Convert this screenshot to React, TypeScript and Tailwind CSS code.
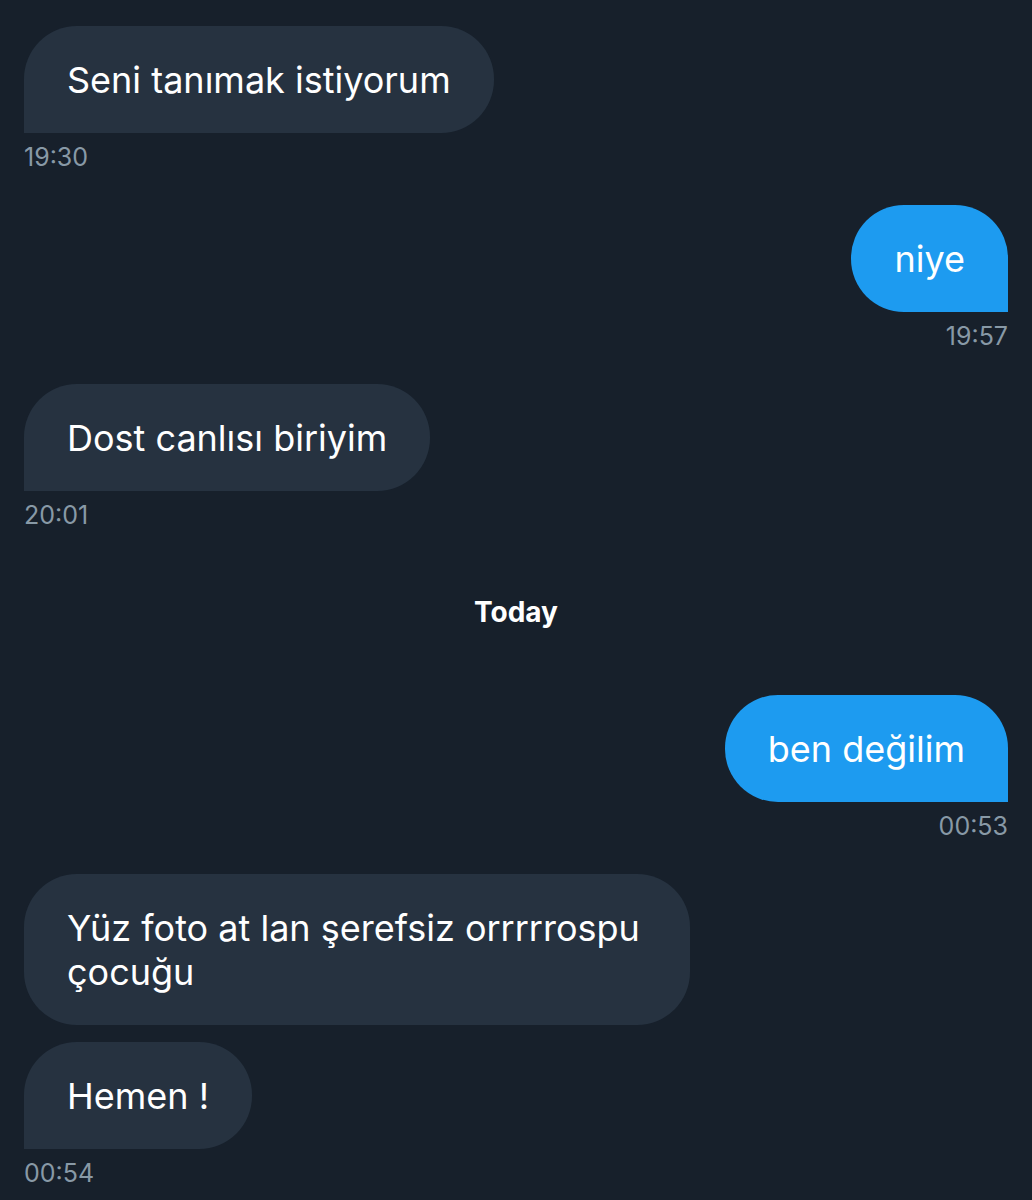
import React from "react";

type Msg = {
  text: string;
  mine?: boolean;
  time?: string;
  tail?: boolean;
};

const Bubble: React.FC<Msg> = ({ text, mine, tail = true }) => {
  const side = mine
    ? "bg-[#1d9bf0] self-end " + (tail ? "rounded-br-none" : "")
    : "bg-[#263240] self-start " + (tail ? "rounded-bl-none" : "");
  return (
    <div
      className={`max-w-[666px] rounded-[53px] px-[43px] py-[31.5px] text-[36px] leading-[44px] text-white ${side}`}
    >
      {text}
    </div>
  );
};

const Time: React.FC<{ value: string; mine?: boolean }> = ({ value, mine }) => (
  <div
    className={`mt-[11px] text-[25px] leading-[26px] text-[#8899a6] ${
      mine ? "self-end" : "self-start"
    }`}
  >
    {value}
  </div>
);

export default function App() {
  return (
    <div
      className="min-h-[1200px] bg-[#17202b] px-6 pt-[26px] flex flex-col"
      style={{ fontFamily: "Inter, 'Noto Sans', sans-serif" }}
    >
      <Bubble text="Seni tanımak istiyorum" />
      <Time value="19:30" />

      <div className="mt-[35px] flex flex-col">
        <Bubble text="niye" mine />
        <Time value="19:57" mine />
      </div>

      <div className="mt-[35px] flex flex-col">
        <Bubble text="Dost canlısı biriyim" />
        <Time value="20:01" />
      </div>

      {/* date divider */}
      <div className="mt-[68px] mb-[67px] text-center text-[28px] leading-8 font-bold text-white">
        Today
      </div>

      <div className="flex flex-col">
        <Bubble text="ben değilim" mine />
        <Time value="00:53" mine />
      </div>

      <div className="mt-[35px] flex flex-col gap-[17px]">
        <Bubble text="Yüz foto at lan şerefsiz orrrrrospu çocuğu" tail={false} />
        <Bubble text="Hemen !" />
      </div>
      <Time value="00:54" />
    </div>
  );
}
